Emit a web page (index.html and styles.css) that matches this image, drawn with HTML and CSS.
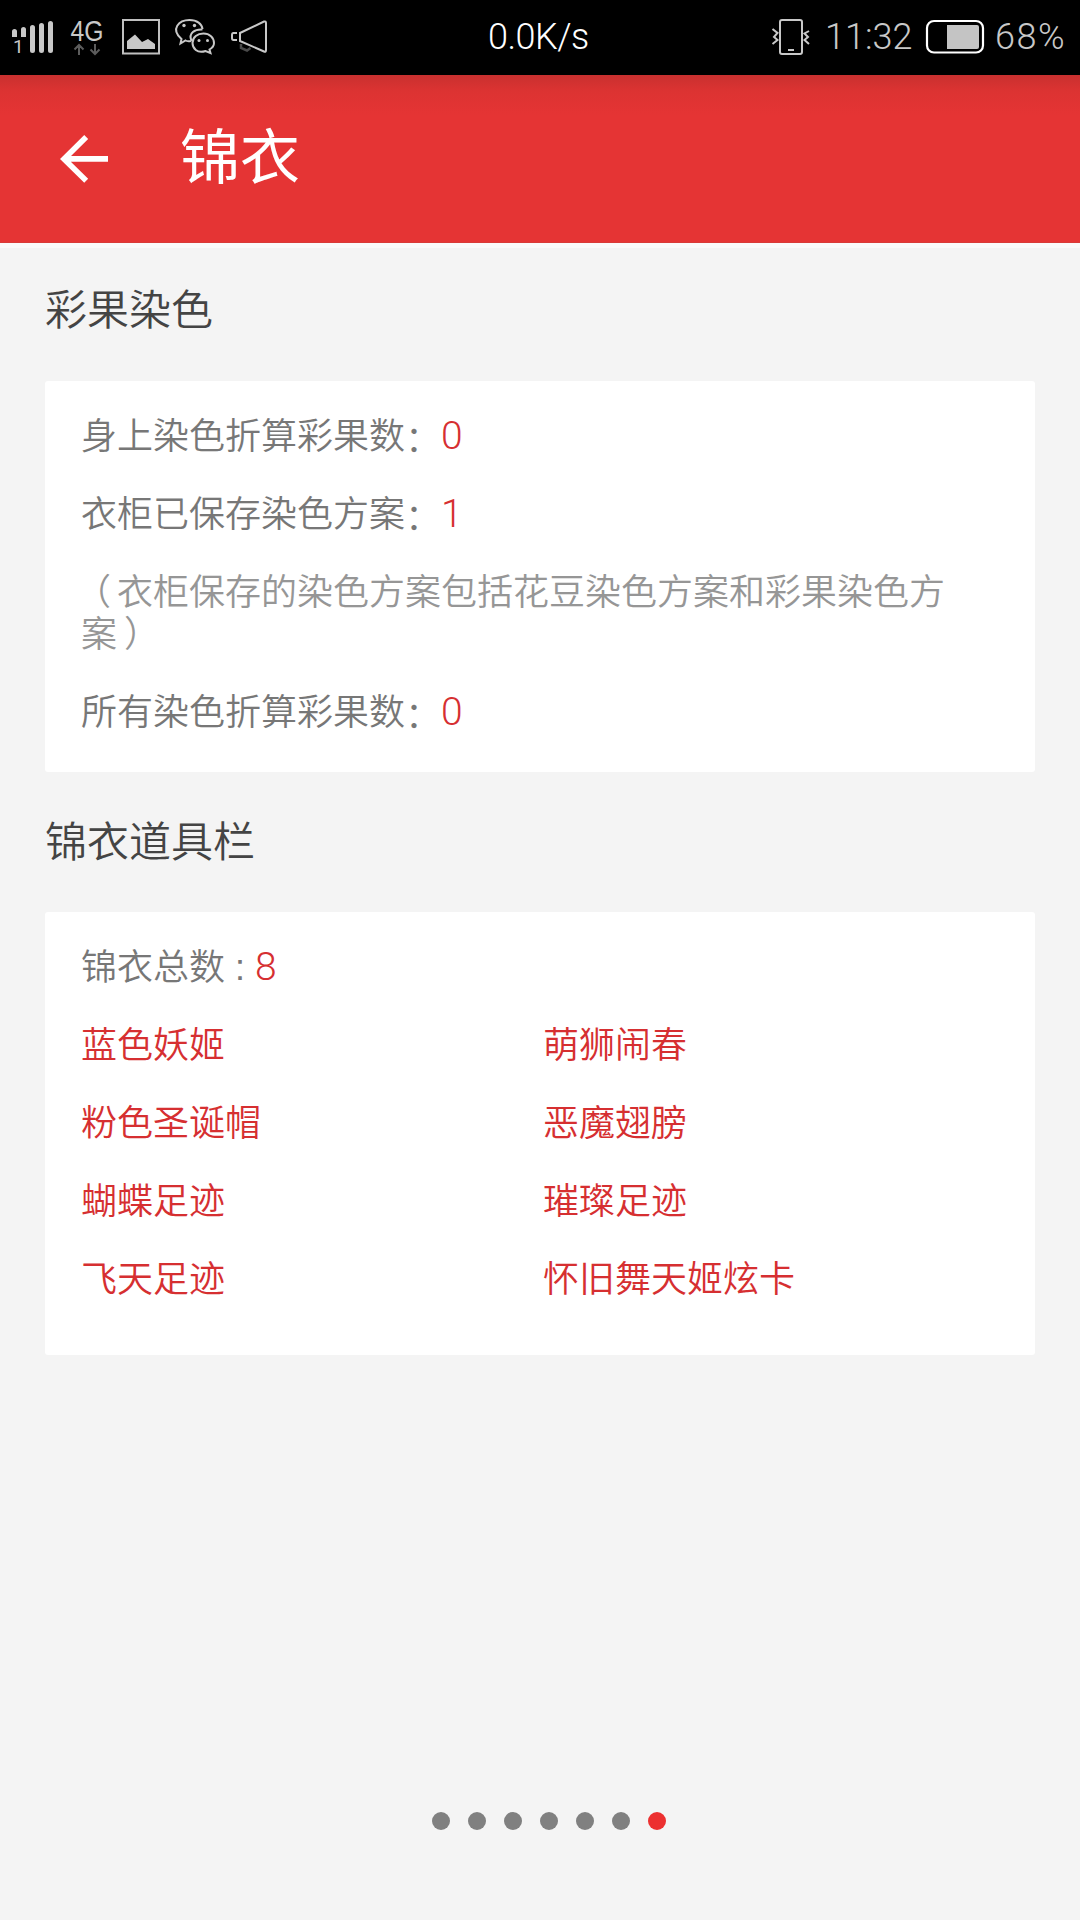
FILE: index.html
```
<!DOCTYPE html>
<html lang="zh-CN">
<head>
    <meta charset="UTF-8">
    <meta name="viewport" content="width=device-width, initial-scale=1.0">
    <title>锦衣</title>
    <link rel="stylesheet" href="styles.css">
</head>
<body>
    <div class="status-bar">
        <div class="status-left">
            <svg class="icon" width="42" height="75" viewBox="12 0 42 75">
                <path d="M12 37V31.500A2.500 2.500 0 0 1 17 31.500V37ZM21 37V29.500A2.500 2.500 0 0 1 26 29.500V37Z" fill="#c8c8c8"/>
                <path d="M32.500 27.500V50.500M41.500 25.500V50.500M50.500 23.500V50.500" stroke="#c8c8c8" stroke-width="5" stroke-linecap="round"/>
                <text x="13" y="53" class="sim">1</text>
            </svg>
            <svg class="icon" width="36" height="75" viewBox="70 0 36 75">
                <text x="70.500" y="41" class="net" textLength="33" lengthAdjust="spacingAndGlyphs">4G</text>
                <path d="M79 55V45M74.500 49.500L79 45L83.500 49.500M95 44V54M90.500 49.500L95 54L99.500 49.500" fill="none" stroke="#5c5c5c" stroke-width="2"/>
            </svg>
            <svg class="icon" width="37" height="75" viewBox="122 0 37 75">
                <rect x="123" y="20" width="36" height="33.500" fill="none" stroke="#c0c0c0" stroke-width="2"/>
                <path d="M127 49V41L135 34.500L142 42L148 39L155 44V49Z" fill="#c8c8c8"/>
            </svg>
            <svg class="icon" width="41" height="75" viewBox="175 0 41 75">
                <g fill="none" stroke="#c8c8c8" stroke-width="2">
                    <path d="M191 41Q187 41.500 185.500 40.500L180.500 43.500L181.500 39C170 29 179 20 189.500 20C197 20 202 24 202.500 29"/>
                    <path d="M191.500 41C188 33 195 29 202.500 29.500"/>
                    <path d="M209.500 49.500L210.500 53L205.500 51C197 54 192.500 48 192.500 43C192.500 37 197.500 33.500 203.500 33.500C209.500 33.500 214 37.500 214 43Q214 47 209.500 49.500Z"/>
                </g>
                <g fill="#c8c8c8">
                    <circle cx="184" cy="25.500" r="1.700"/>
                    <circle cx="194.500" cy="25.500" r="1.700"/>
                    <circle cx="199" cy="40.500" r="1.500"/>
                    <circle cx="207.500" cy="40.500" r="1.500"/>
                </g>
            </svg>
            <svg class="icon" width="36" height="75" viewBox="232 0 36 75">
                <path d="M241 44V48L247 50.500L250.500 48" fill="none" stroke="#4a4a4a" stroke-width="2.500"/>
                <path d="M240 33L264 21.500Q266 21 266 23V50Q266 52.500 264 51.500L240 41ZM237 33H233.500Q232 33 232 35V38Q232 40 233.500 40H237" fill="none" stroke="#c8c8c8" stroke-width="2"/>
            </svg>
        </div>
        <div class="speed">0.0K/s</div>
        <div class="status-right">
            <svg class="icon" width="40" height="75" viewBox="771 0 40 75">
                <g fill="none" stroke="#c8c8c8" stroke-width="2">
                    <rect x="780" y="20" width="22" height="34" rx="2"/>
                    <path d="M772.500 29L777.500 33L774 37L777.500 40L772.500 44M809 31L804.500 33.500L808 37L804.500 40L809 44"/>
                    <path d="M788 50H794"/>
                </g>
            </svg>
            <span class="time">11:32</span>
            <svg class="icon" width="60" height="75" viewBox="925 0 60 75">
                <rect x="927" y="21" width="56" height="31.500" rx="7" fill="none" stroke="#fff" stroke-width="2.200"/>
                <path d="M947 25H977Q979 25 979 27V47Q979 49 977 49H947Z" fill="#c4c4c4"/>
            </svg>
            <span class="percent">68%</span>
        </div>
    </div>

    <header class="header">
        <svg class="back" width="48" height="48" viewBox="0 0 48 48">
            <path d="M26.200 2L4 23.900L26.200 45.800M4 23.900H48" fill="none" stroke="#fff" stroke-width="5.600"/>
        </svg>
        <h1>锦衣</h1>
    </header>

    <main class="content">
        <h2>彩果染色</h2>
        <section class="card">
            <p>身上染色折算彩果数<span class="colon">：</span><span class="num">0</span></p>
            <p>衣柜已保存染色方案<span class="colon">：</span><span class="num">1</span></p>
            <p class="note"><span class="open">（</span>衣柜保存的染色方案包括花豆染色方案和彩果染色方案<span class="close">）</span></p>
            <p>所有染色折算彩果数<span class="colon">：</span><span class="num">0</span></p>
        </section>

        <h2>锦衣道具栏</h2>
        <section class="card">
            <p>锦衣总数 : <span class="num">8</span></p>
            <ul class="items">
                <li>蓝色妖姬</li>
                <li>萌狮闹春</li>
                <li>粉色圣诞帽</li>
                <li>恶魔翅膀</li>
                <li>蝴蝶足迹</li>
                <li>璀璨足迹</li>
                <li>飞天足迹</li>
                <li>怀旧舞天姬炫卡</li>
            </ul>
        </section>
    </main>

    <div class="dots">
        <span></span>
        <span></span>
        <span></span>
        <span></span>
        <span></span>
        <span></span>
        <span class="active"></span>
    </div>
</body>
</html>
```
FILE: styles.css
```
:root {
    --red: #e53434;
    --text-red: #d62f31;
    --bg: #f4f4f4;
    --font: 'Liberation Sans', 'Noto Sans CJK SC', sans-serif;
    --font-num: Roboto, 'Liberation Sans', sans-serif;
}

* {
    box-sizing: border-box;
    margin: 0;
    padding: 0;
}

body {
    width: 1080px;
    height: 1920px;
    display: flex;
    flex-direction: column;
    background: var(--bg);
    font-family: var(--font);
    font-weight: 350;
    overflow: hidden;
}

.status-bar {
    height: 75px;
    flex: none;
    display: grid;
    grid-template-columns: 488px 283px 1fr;
    background: #000;
    color: #c8c8c8;
    font-family: var(--font-num);
    font-size: 36px;
    font-weight: 350;
    line-height: 75px;
}

.status-left {
    display: flex;
    gap: 16px;
    padding-left: 12px;
}

.icon {
    display: block;
    flex: none;
    overflow: visible;
}

.sim {
    font-size: 19px;
    font-weight: 400;
    fill: #c8c8c8;
}

.net {
    font-family: 'Liberation Sans', sans-serif;
    font-size: 29px;
    fill: #c8c8c8;
}

.speed {
    color: #fff;
    letter-spacing: -0.5px;
}

.status-right {
    display: flex;
}

.time {
    width: 114px;
    padding-left: 14px;
}

.percent {
    margin-left: 10px;
    letter-spacing: 1.5px;
}

.header {
    height: 168px;
    flex: none;
    display: flex;
    align-items: center;
    padding-left: 60px;
    background: linear-gradient(#c9302f 0, #dc3332 16px, var(--red) 40px);
    border-bottom: 1px solid #d83a38;
    color: #fff;
}

.header h1 {
    margin-left: 72px;
    font-size: 60px;
    font-weight: 400;
    line-height: 80px;
}

.content {
    flex: 1;
    padding: 0 45px;
    border-top: 5px solid #fafafa;
}

h2 {
    height: 140px;
    padding-top: 43px;
    font-size: 42px;
    font-weight: 350;
    line-height: 56px;
    color: #444;
}

.content h2:first-child {
    height: 133px;
    padding-top: 35px;
}

.card {
    padding: 35px 36px 38px;
    background: #fff;
    border-radius: 3px;
    color: #777;
    font-size: 36px;
    line-height: 42px;
}

.card p {
    margin-bottom: 36px;
}

.card p:last-child {
    margin-bottom: 0;
}

.card .note {
    padding-right: 24px;
    color: #969696;
    text-spacing-trim: space-all;
}

.colon {
    position: relative;
    top: 3px;
}

.open {
    position: relative;
    left: -6px;
}

.close {
    position: relative;
    left: 7px;
}

.num {
    color: var(--text-red);
    font-family: var(--font-num);
    font-size: 39px;
    line-height: 1;
}

.items {
    display: grid;
    grid-template-columns: 462px 1fr;
    row-gap: 36px;
    padding-bottom: 16px;
    list-style: none;
    color: var(--text-red);
}

.dots {
    flex: none;
    display: flex;
    gap: 18px;
    padding: 0 0 90px 432px;
}

.dots span {
    width: 18px;
    height: 18px;
    border-radius: 50%;
    background: #808080;
}

.dots .active {
    background: #ec3030;
}
```
